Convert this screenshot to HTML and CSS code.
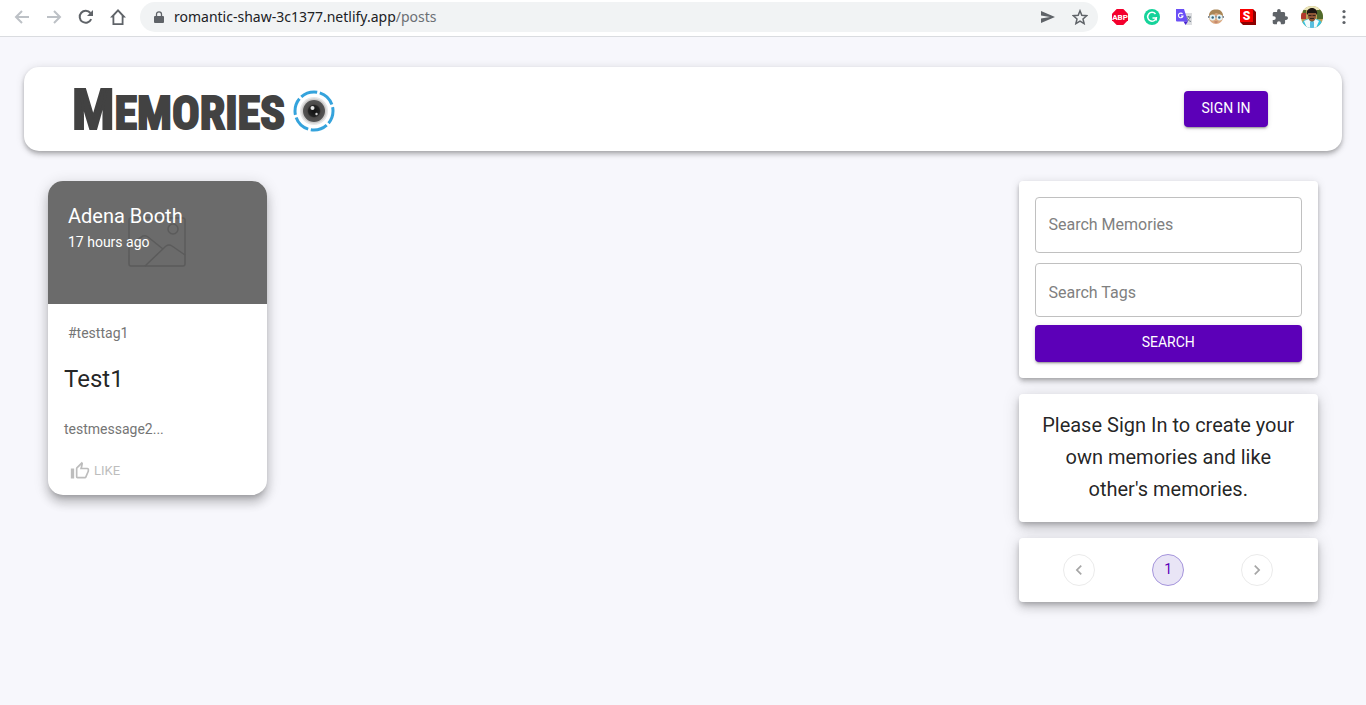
FILE: index.html
```html
<!DOCTYPE html>
<html lang="en">
<head>
<meta charset="utf-8">
<title>Memories</title>
<link rel="stylesheet" href="styles.css">
</head>
<body>
<header class="browser">
  <button class="nav-btn faded" aria-label="Back"><svg viewBox="0 0 16 16"><path d="M15 8H2M8 2 2 8l6 6"/></svg></button>
  <button class="nav-btn faded" aria-label="Forward"><svg viewBox="0 0 16 16"><path d="M1 8h13M8 2l6 6-6 6"/></svg></button>
  <button class="nav-btn" aria-label="Reload"><svg viewBox="0 0 16 16"><path d="M13.2 10.2A6 6 0 1 1 12.4 4"/><path class="solid" d="M15 1v6H9z"/></svg></button>
  <button class="nav-btn" aria-label="Home"><svg viewBox="0 0 16 16"><path class="solid" fill-rule="evenodd" d="M8 0 0 8.500h2.500V16h11V8.500H16zM8 2.700l3.700 4V14.200H4.300V6.700z"/></svg></button>
  <div class="address">
    <svg class="lock" viewBox="0 0 10 13"><path d="M1 5h8a1 1 0 0 1 1 1v5a1 1 0 0 1-1 1H1a1 1 0 0 1-1-1V6a1 1 0 0 1 1-1z" fill="#5f6368"/><path d="M2.500 5.500V3.300a2.500 2.500 0 0 1 5 0v2.200" fill="none" stroke="#5f6368" stroke-width="1.300"/></svg>
    <p class="url">romantic-shaw-3c1377.netlify.app<span class="path">/posts</span></p>
    <button class="nav-btn" aria-label="Send"><svg viewBox="0 0 16 16"><path class="solid" d="M1 2l14 6-14 6V9.400L10 8 1 6.600z"/></svg></button>
    <button class="nav-btn" aria-label="Bookmark"><svg viewBox="0 0 16 16"><path class="thin" d="m8 1.800 1.800 4.500 4.900.4-3.700 3.200 1.100 4.700L8 12.100l-4.100 2.500L5 9.900 1.300 6.700l4.900-.4z"/></svg></button>
  </div>
  <button class="nav-btn" aria-label="Adblock Plus"><svg viewBox="0 0 16 16"><path fill="#f4002d" stroke="none" d="M4.700 0h6.600L16 4.700v6.600L11.300 16H4.700L0 11.300V4.700z"/><text class="abp" x="8" y="10.800" text-anchor="middle">ABP</text></svg></button>
  <button class="nav-btn" aria-label="Grammarly"><svg viewBox="0 0 16 16"><circle cx="8" cy="8" r="8" fill="#15d39a"/><path d="M11.500 5A4.400 4.400 0 1 0 12.300 9H8.500" fill="none" stroke="#fff" stroke-width="1.500"/><path d="M12.400 8v3.400" stroke="#fff" stroke-width="1.200"/></svg></button>
  <button class="nav-btn" aria-label="Translate"><svg viewBox="0 0 16 16"><path fill="#dcdde0" stroke="none" d="M7 4h9v12H10z"/><path d="M10 8h5M12.500 7v1M14 8c0 2-2 3.500-3 4M11 9c1 2 2 3 4 3.500" stroke="#6f7b86" stroke-width="1"/><path fill="#6b50f6" stroke="none" d="M0 0h8l4 12.500H1a1 1 0 0 1-1-1z"/><path fill="#4a25d0" stroke="none" d="M7.500 12.500H12L9.500 16z"/><path d="M6.600 5A2.300 2.300 0 1 0 7 7H5" stroke="#fff" stroke-width="1.100"/></svg></button>
  <button class="nav-btn" aria-label="Glasses extension"><svg viewBox="0 0 16 16"><circle cx="8" cy="8" r="7" fill="#dba980"/><path fill="#a98657" stroke="none" d="M1 7C1 2.500 4 .6 8 .6S15 2.500 15 7L11 5 8 4 5 6z"/><path d="M0 8h16" stroke="#5c6670" stroke-width="1.500"/><circle cx="4.500" cy="8.500" r="3" fill="#e2f3f7"/><circle cx="11.500" cy="8.500" r="3" fill="#e2f3f7"/><circle cx="4.700" cy="8.500" r="1.200" fill="#35657a"/><circle cx="11.300" cy="8.500" r="1.200" fill="#35657a"/><path d="M6.500 13h3" stroke="#b06a5d" stroke-width="1"/></svg></button>
  <button class="nav-btn" aria-label="S extension"><svg viewBox="0 0 16 16"><path fill="#8d0000" stroke="none" d="M0 0h13l3 3v13H3l-3-3z"/><path fill="#f80000" stroke="none" d="M0 0h13v13H0z"/><text class="ess" x="6.500" y="10.800" text-anchor="middle">S</text></svg></button>
  <button class="nav-btn" aria-label="Extensions"><svg viewBox="1 1 22 22"><path class="solid" d="M20.500 11H19V7c0-1.100-.9-2-2-2h-4V3.500a2.500 2.500 0 0 0-5 0V5H4c-1.100 0-2 .9-2 2v3.800h1.500a2.700 2.700 0 0 1 0 5.400H2V20c0 1.100.9 2 2 2h3.800v-1.500a2.700 2.700 0 0 1 5.400 0V22H17c1.100 0 2-.9 2-2v-4h1.500a2.500 2.500 0 0 0 0-5z"/></svg></button>
  <button class="nav-btn avatar" aria-label="Profile"><svg viewBox="0 0 22 22"><clipPath id="face"><circle cx="11" cy="11" r="11"/></clipPath><g clip-path="url(#face)" stroke="none"><path fill="#b9a05a" d="M0 0h22v22H0z"/><path fill="#e9e4b8" d="M3 0h15v4H3z"/><path fill="#b0382c" d="M0 7h5v6H0z"/><path fill="#506a2c" d="M16 4h6v9h-6zM2 4h3v3H2z"/><path fill="#35c4e0" d="M0 22c0-7 4-9 8-9h6c5 0 8 3 8 9z"/><path fill="#f3fbfc" d="M3 15l5-2 3 5 3-5 4 2-3 7H6z"/><path fill="#59bfe0" d="M9 16h4v6H9z"/><ellipse cx="11" cy="10" rx="4" ry="5.500" fill="#8d5536"/><path fill="#1c1512" d="M6 9C5 4 8 2 11 2s6 2 5 7l-1.500-2h-7z"/><path fill="#38221a" d="M7.500 9h3v1h-3zM11.500 9h3v1h-3zM9 12h4v1H9z"/></g></svg></button>
  <button class="nav-btn" aria-label="Menu"><svg viewBox="0 0 16 16"><g class="dots"><circle cx="8" cy="2.500" r="1.600"/><circle cx="8" cy="8" r="1.600"/><circle cx="8" cy="13.500" r="1.600"/></g></svg></button>
</header>

<div class="page">
  <header class="app-bar">
    <a class="brand" href="#">
      <span class="wordmark">M<span class="rest">EMORIES</span></span>
      <svg class="lens" viewBox="0 0 42 42">
        <defs><radialGradient id="glass"><stop offset="0" stop-color="#111"/><stop offset=".5" stop-color="#222"/><stop offset=".62" stop-color="#4c4a49"/><stop offset="1" stop-color="#555"/></radialGradient></defs>
        <circle class="ring" cx="21" cy="21" r="19" pathLength="360"/>
        <circle cx="21" cy="21" r="14" fill="#e6e6e6"/>
        <circle cx="21" cy="21" r="12.500" fill="#cdcbca"/>
        <circle cx="21" cy="21" r="11" fill="url(#glass)"/>
        <circle cx="19.500" cy="18" r="2" fill="#e4e4e4"/>
        <circle cx="23.500" cy="24" r="1.200" fill="#d4d4d4"/>
      </svg>
    </a>
    <a class="btn sign-in" href="#">Sign In</a>
  </header>

  <main class="layout">
    <section class="posts">
      <article class="card">
        <div class="media">
          <svg class="placeholder" viewBox="0 0 58 50"><rect x="1" y="1" width="56" height="48" rx="2"/><circle cx="45" cy="12" r="5"/><path d="M1 28l14-9q3-1 5 1l15 12M17 49l21-20q3-2 6 0l13 9"/></svg>
          <div class="overlay">
            <h2 class="author">Adena Booth</h2>
            <p class="time">17 hours ago</p>
          </div>
        </div>
        <p class="tags">#testtag1</p>
        <h3 class="title">Test1</h3>
        <p class="message">testmessage2...</p>
        <div class="actions">
          <button class="like" disabled>
            <svg viewBox="0 0 24 24"><path d="M9 21h9c.83 0 1.540-.5 1.840-1.220l3.020-7.050c.09-.23.140-.47.140-.73v-2c0-1.100-.9-2-2-2h-6.310l.95-4.570.03-.32c0-.41-.17-.79-.44-1.060L14.170 1 7.580 7.590C7.220 7.950 7 8.450 7 9v10c0 1.100.9 2 2 2zM9 9l4.340-4.340L12 10h9v2l-3 7H9V9zM1 9h4v12H1z"/></svg>
            Like
          </button>
        </div>
      </article>
    </section>

    <aside class="side">
      <form class="panel search">
        <input class="field" type="text" aria-label="Search Memories" placeholder="Search Memories">
        <input class="field tags-field" type="text" aria-label="Search Tags" placeholder="Search Tags">
        <button class="btn" type="button">Search</button>
      </form>
      <section class="panel raised">
        <p class="notice">Please Sign In to create your own memories and like other's memories.</p>
      </section>
      <nav class="panel raised pager" aria-label="Pages">
        <button class="page-btn" disabled aria-label="Previous page"><svg viewBox="0 0 24 24"><path d="M15.410 7.410 14 6l-6 6 6 6 1.410-1.410L10.830 12z"/></svg></button>
        <a class="page-btn current" href="#" aria-current="page">1</a>
        <button class="page-btn" disabled aria-label="Next page"><svg viewBox="0 0 24 24"><path d="M10 6 8.590 7.410 13.170 12l-4.580 4.590L10 18l6-6z"/></svg></button>
      </nav>
    </aside>
  </main>
</div>
</body>
</html>
```
FILE: styles.css
```css
* { box-sizing: border-box; }

body {
  margin: 0;
  min-height: 100vh;
  background: #f7f7fc;
  color: rgba(0, 0, 0, 0.87);
  font-family: Roboto, "Liberation Sans", sans-serif;
  font-size: 14px;
  line-height: 20px;
}

h2, h3, p { margin: 0; font-weight: 400; }
a { color: inherit; text-decoration: none; }
button, input { font: inherit; }

/* Browser toolbar */
.browser {
  display: flex;
  align-items: center;
  gap: 16px;
  height: 37px;
  padding: 0 14px 2px;
  background: #fff;
  border-bottom: 1px solid #dadce0;
}
.nav-btn {
  flex: none;
  display: flex;
  width: 16px;
  height: 16px;
  padding: 0;
  border: 0;
  background: none;
}
.nav-btn svg {
  width: 100%;
  height: 100%;
  fill: none;
  stroke: #5f6368;
  stroke-width: 2;
}
.nav-btn circle { stroke: none; }
.nav-btn .solid { fill: #5f6368; stroke: none; }
.nav-btn .thin { stroke-width: 1.5; }
.nav-btn.faded svg { stroke: #bdc1c6; }
.dots { fill: #5f6368; }
.avatar { width: 22px; height: 22px; margin: 0 -3px; }
.abp, .ess { fill: #fff; stroke: none; font-weight: 700; }
.abp { font-size: 8px; }
.ess { font-size: 12px; font-weight: 900; }

.address {
  flex: 1;
  display: flex;
  align-items: center;
  gap: 16px;
  height: 30px;
  margin-left: -2px;
  margin-right: -2px;
  padding: 0 10px 0 14px;
  border-radius: 15px;
  background: #f1f3f4;
}
.lock { width: 10px; height: 13px; margin-right: -6px; }
.url {
  flex: 1;
  color: #202124;
  font-family: "Noto Sans", "Open Sans", sans-serif;
  white-space: nowrap;
}
.path { color: #6b6f74; }

/* Page */
.page { padding: 30px 24px; }

.app-bar {
  display: flex;
  align-items: center;
  justify-content: space-between;
  height: 84px;
  padding: 0 74px 0 48px;
  border-radius: 15px;
  background: #fff;
  box-shadow: 0 2px 4px -1px rgba(0, 0, 0, 0.2), 0 4px 5px rgba(0, 0, 0, 0.14), 0 1px 10px rgba(0, 0, 0, 0.12);
}
.brand { display: flex; align-items: center; gap: 8px; padding-top: 4px; }
.wordmark {
  color: #424242;
  font-family: "Liberation Sans Narrow", "Roboto Condensed", "Open Sans Condensed", Roboto, sans-serif;
  font-size: 56px;
  font-weight: 700;
  line-height: 64px;
  -webkit-text-stroke: 2px #424242;
}
.rest { font-size: 46px; }
.lens { width: 42px; height: 42px; }
.ring { fill: none; stroke: #35a3dc; stroke-width: 3; stroke-dasharray: 52 8; stroke-dashoffset: 12; }

.btn {
  padding: 7px 16px 9px;
  border: 0;
  border-radius: 4px;
  background: #5c00b8;
  color: #fff;
  text-align: center;
  text-transform: uppercase;
  box-shadow: 0 3px 1px -2px rgba(0, 0, 0, 0.2), 0 2px 2px rgba(0, 0, 0, 0.14), 0 1px 5px rgba(0, 0, 0, 0.12);
}
.sign-in { min-width: 84px; }
.search .btn { padding-bottom: 10px; }

.layout {
  display: grid;
  grid-template-columns: repeat(4, 1fr);
  gap: 24px;
  align-items: start;
  padding: 30px 24px;
}
.posts {
  grid-column: span 3;
  display: grid;
  grid-template-columns: repeat(4, 1fr);
  gap: 24px;
}

/* Post card */
.card {
  overflow: hidden;
  border-radius: 15px;
  background: #fff;
  box-shadow: 0 5px 5px -3px rgba(0, 0, 0, 0.2), 0 8px 10px 1px rgba(0, 0, 0, 0.14), 0 3px 14px 2px rgba(0, 0, 0, 0.12);
}
.media {
  position: relative;
  display: flex;
  align-items: center;
  justify-content: center;
  aspect-ratio: 16 / 9;
  background: #6b6b6b;
}
.placeholder { width: 58px; height: 50px; fill: none; stroke: #5b5b5b; stroke-width: 1.5; }
.overlay { position: absolute; top: 20px; left: 20px; color: #fff; }
.author { font-size: 20px; line-height: 31px; }
.tags { margin: 19px 20px 20px; color: #757575; }
.title { margin: 0 16px 24px; font-size: 24px; line-height: 32px; }
.message { margin: 0 16px 17px; color: #757575; }
.actions { padding: 0 16px 8px; }
.like {
  display: flex;
  align-items: center;
  gap: 4px;
  height: 31px;
  padding: 0 6px;
  border: 0;
  background: none;
  color: #bdbdbd;
  font-size: 13px;
  text-transform: uppercase;
}
.like svg { width: 20px; height: 20px; fill: #bdbdbd; }

/* Side column */
.side { display: flex; flex-direction: column; gap: 16px; }
.panel {
  padding: 16px;
  border-radius: 4px;
  background: #fff;
  box-shadow: 0 2px 4px -1px rgba(0, 0, 0, 0.2), 0 4px 5px rgba(0, 0, 0, 0.14), 0 1px 10px rgba(0, 0, 0, 0.12);
}
.raised {
  box-shadow: 0 3px 5px -1px rgba(0, 0, 0, 0.2), 0 6px 10px rgba(0, 0, 0, 0.14), 0 1px 18px rgba(0, 0, 0, 0.12);
}
.search { display: flex; flex-direction: column; }
.field {
  width: 100%;
  height: 56px;
  margin-bottom: 10px;
  padding: 0 13px 2px;
  border: 1px solid #c0c0c0;
  border-radius: 4px;
  background: #fff;
  font-size: 16px;
}
.field::placeholder { color: #808080; opacity: 1; }
.tags-field { height: 54px; margin-bottom: 8px; padding: 4px 13px 0; }
.notice { margin-top: -1px; padding-bottom: 1px; font-size: 20px; line-height: 32px; text-align: center; }
.pager { display: flex; justify-content: space-around; }
.page-btn {
  display: flex;
  align-items: center;
  justify-content: center;
  width: 32px;
  height: 32px;
  padding: 0;
  border: 1px solid #ebebeb;
  border-radius: 16px;
  background: #fff;
}
.page-btn svg { width: 20px; height: 20px; fill: #a6a6a6; }
.current { padding-bottom: 2px; border-color: #a595dc; background: #e9e5f6; color: #5c00b8; }
```
